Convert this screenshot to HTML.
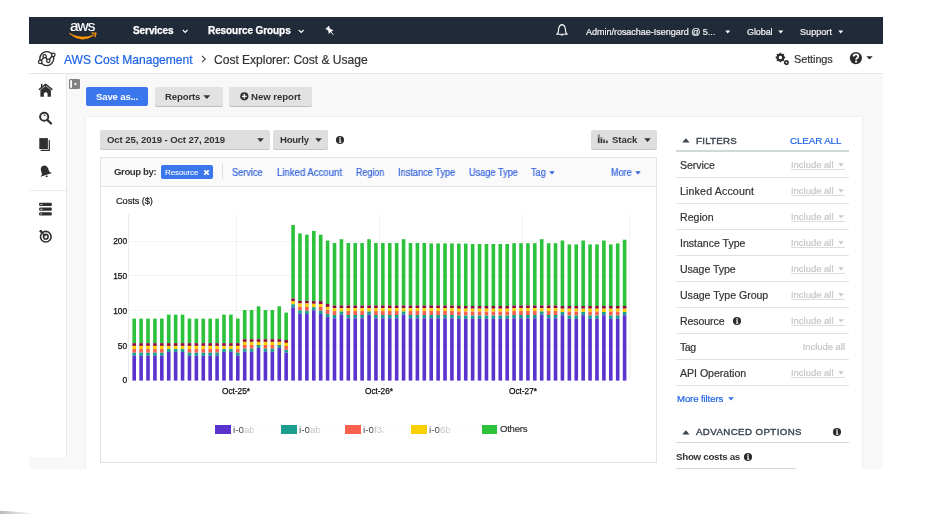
<!DOCTYPE html>
<html><head><meta charset="utf-8"><style>
html,body{margin:0;padding:0;background:#fff;width:931px;height:514px;overflow:hidden;position:relative}
.t{position:absolute;will-change:transform;white-space:nowrap;font-family:"Liberation Sans", sans-serif}
.r{position:absolute}
</style></head><body>
<div class="r" style="left:29.00px;top:74.00px;width:854.00px;height:395.00px;background:#f8f8f8;"></div>
<div class="r" style="left:29.00px;top:74.00px;width:37.00px;height:383.00px;background:#fff;"></div>
<div class="r" style="left:65.50px;top:74.00px;width:1.50px;height:383.00px;background:#e8e8e8;"></div>
<div class="r" style="left:29.00px;top:190.00px;width:36.50px;height:1.20px;background:#ececec;"></div>
<div class="r" style="left:29.00px;top:17.00px;width:854.00px;height:27.00px;background:#212a39;"></div>
<div class="r" style="left:29.00px;top:44.00px;width:854.00px;height:29.00px;background:#fff;"></div>
<div class="r" style="left:29.00px;top:73.00px;width:854.00px;height:1.00px;background:#e6e6e6;"></div>
<div class="t" style="left:70.00px;top:17.83px;font-size:15.2px;line-height:15.2px;color:#fff;font-weight:400;letter-spacing:-0.888px;-webkit-text-stroke:0.2px #fff;">aws</div>
<svg class="r" style="left:64.00px;top:19.00px" width="36" height="22" viewBox="0 0 36 22"><path d="M5.1 14.3 Q18 25.2 30.2 15.8 Q18 21.0 5.1 14.3 Z" fill="#f90" stroke="#f90" stroke-width="0.6" stroke-linejoin="round"/><path d="M28 14.1 L32 14.1 L31 17.6" stroke="#f90" stroke-width="1.4" fill="none" stroke-linecap="round" stroke-linejoin="round"/></svg>
<div class="t" style="left:133.20px;top:26.04px;font-size:10px;line-height:10px;color:#fff;font-weight:700;letter-spacing:-0.079px;-webkit-text-stroke:0.25px #fff;">Services</div>
<svg class="r" style="left:181.80px;top:28.80px" width="7" height="5" viewBox="0 0 7 5"><path d="M0.8 1 L3.2 3.4 L5.6 1" stroke="#fff" stroke-width="1.1" fill="none"/></svg>
<div class="t" style="left:207.50px;top:26.04px;font-size:10px;line-height:10px;color:#fff;font-weight:700;letter-spacing:-0.086px;-webkit-text-stroke:0.25px #fff;">Resource Groups</div>
<svg class="r" style="left:298.20px;top:28.80px" width="7" height="5" viewBox="0 0 7 5"><path d="M0.8 1 L3.2 3.4 L5.6 1" stroke="#fff" stroke-width="1.1" fill="none"/></svg>
<svg class="r" style="left:320.00px;top:22.00px" width="20" height="16" viewBox="0 0 20 16"><g transform="translate(10.3 9.1) rotate(-40) scale(0.88)"><rect x="-2.7" y="-5.6" width="5.4" height="1.3" rx="0.4" fill="#fff"/><rect x="-1.7" y="-4.6" width="3.4" height="3.8" fill="#fff"/><path d="M-1.7 -1.2 L-3.6 1.3 L3.6 1.3 L1.7 -1.2 Z" fill="#fff"/><path d="M0 1.2 L0 5.8" stroke="#fff" stroke-width="0.9"/></g></svg>
<svg class="r" style="left:552.00px;top:22.00px" width="20" height="18" viewBox="0 0 20 18"><path d="M10 2.6 C12.6 3 13.2 5 13.4 7.4 L13.8 10.6 L15.2 12.2 L4.8 12.2 L6.2 10.6 L6.6 7.4 C6.8 5 7.4 3 10 2.6 Z" stroke="#fff" stroke-width="1.1" fill="none" stroke-linejoin="round"/><path d="M8.6 12.8 Q10 14.8 11.4 12.8 Z" fill="#fff"/></svg>
<div class="t" style="left:585.80px;top:27.88px;font-size:9.0px;line-height:9.0px;color:#f4f4f4;font-weight:400;letter-spacing:-0.017px;-webkit-text-stroke:0.2px #f4f4f4;">Admin/rosachae-Isengard @ 5...</div>
<svg class="r" style="left:724.80px;top:29.60px" width="6" height="4" viewBox="0 0 6 4"><path d="M0.3 0.6 L5.2 0.6 L2.75 3.4 Z" fill="#fff"/></svg>
<div class="t" style="left:746.70px;top:27.88px;font-size:9.0px;line-height:9.0px;color:#f4f4f4;font-weight:400;letter-spacing:-0.084px;-webkit-text-stroke:0.2px #f4f4f4;">Global</div>
<svg class="r" style="left:778.40px;top:29.60px" width="6" height="4" viewBox="0 0 6 4"><path d="M0.3 0.6 L5.2 0.6 L2.75 3.4 Z" fill="#fff"/></svg>
<div class="t" style="left:800.30px;top:27.88px;font-size:9.0px;line-height:9.0px;color:#f4f4f4;font-weight:400;letter-spacing:0.064px;-webkit-text-stroke:0.2px #f4f4f4;">Support</div>
<svg class="r" style="left:838.40px;top:29.60px" width="6" height="4" viewBox="0 0 6 4"><path d="M0.3 0.6 L5.2 0.6 L2.75 3.4 Z" fill="#fff"/></svg>
<svg class="r" style="left:35.00px;top:48.00px" width="24" height="22" viewBox="0 0 24 22"><g stroke="#2b2b2b" stroke-width="1.35" fill="none"><circle cx="11.8" cy="10.6" r="7.0"/><path d="M5.35 13.9 L9.6 8.1 L13.3 12.8 L18.2 6.8"/></g><g fill="#fff" stroke="#2b2b2b" stroke-width="1.25"><circle cx="5.2" cy="13.9" r="1.75"/><circle cx="9.6" cy="8.2" r="1.7"/><circle cx="13.3" cy="12.8" r="1.7"/><circle cx="18.3" cy="6.8" r="1.75"/></g></svg>
<div class="t" style="left:64.40px;top:53.56px;font-size:12.1px;line-height:12.1px;color:#1f64e6;font-weight:400;letter-spacing:-0.042px;-webkit-text-stroke:0.2px #1f64e6;">AWS Cost Management</div>
<svg class="r" style="left:200.00px;top:54.00px" width="8" height="10" viewBox="0 0 8 10"><path d="M2 1.8 L5.3 5 L2 8.2" stroke="#444" stroke-width="1.1" fill="none"/></svg>
<div class="t" style="left:213.50px;top:53.56px;font-size:12.1px;line-height:12.1px;color:#333;font-weight:400;letter-spacing:-0.037px;-webkit-text-stroke:0.2px #333;">Cost Explorer: Cost &amp; Usage</div>
<svg class="r" style="left:772.00px;top:50.00px" width="20" height="18" viewBox="0 0 20 18"><g transform="translate(8.4 7.5)" fill="#2b2b2b"><circle r="2.75" fill="none" stroke="#2b2b2b" stroke-width="2"/><rect x="-0.95" y="-4.7" width="1.9" height="2" transform="rotate(0)"/><rect x="-0.95" y="-4.7" width="1.9" height="2" transform="rotate(45)"/><rect x="-0.95" y="-4.7" width="1.9" height="2" transform="rotate(90)"/><rect x="-0.95" y="-4.7" width="1.9" height="2" transform="rotate(135)"/><rect x="-0.95" y="-4.7" width="1.9" height="2" transform="rotate(180)"/><rect x="-0.95" y="-4.7" width="1.9" height="2" transform="rotate(225)"/><rect x="-0.95" y="-4.7" width="1.9" height="2" transform="rotate(270)"/><rect x="-0.95" y="-4.7" width="1.9" height="2" transform="rotate(315)"/></g><g transform="translate(14.4 12.6)" fill="#2b2b2b"><circle r="1.55" fill="none" stroke="#2b2b2b" stroke-width="1.5"/><rect x="-0.65" y="-2.6" width="1.3" height="1.2" transform="rotate(15)"/><rect x="-0.65" y="-2.6" width="1.3" height="1.2" transform="rotate(75)"/><rect x="-0.65" y="-2.6" width="1.3" height="1.2" transform="rotate(135)"/><rect x="-0.65" y="-2.6" width="1.3" height="1.2" transform="rotate(195)"/><rect x="-0.65" y="-2.6" width="1.3" height="1.2" transform="rotate(255)"/><rect x="-0.65" y="-2.6" width="1.3" height="1.2" transform="rotate(315)"/></g></svg>
<div class="t" style="left:793.50px;top:53.57px;font-size:10.9px;line-height:10.9px;color:#333;font-weight:400;letter-spacing:-0.083px;-webkit-text-stroke:0.2px #333;">Settings</div>
<svg class="r" style="left:846.00px;top:48.00px" width="20" height="20" viewBox="0 0 20 20"><circle cx="9.9" cy="10.1" r="6.1" fill="#2b2b2b"/><path d="M7.6 8.5 C7.6 5.6 12.3 5.6 12.3 8.3 C12.3 10 10.1 10.1 10.1 11.8" stroke="#fff" stroke-width="1.8" fill="none"/><rect x="9.1" y="12.7" width="2" height="1.8" fill="#fff"/></svg>
<svg class="r" style="left:865.50px;top:55.80px" width="7" height="4" viewBox="0 0 7 4"><path d="M0.3 0.3 L6.7 0.3 L3.5 3.5 Z" fill="#2b2b2b"/></svg>
<svg class="r" style="left:36.00px;top:80.00px" width="20" height="20" viewBox="0 0 20 20"><path d="M3.4 9.4 L9.6 4.3 L15.9 9.4" stroke="#2f2f2f" stroke-width="1.45" fill="none" stroke-linecap="round" stroke-linejoin="round"/><path d="M4.4 10 L9.6 6 L14.9 10 L14.9 16.7 L11.6 16.7 L11.6 13.4 Q9.8 10.9 7.9 13.4 L7.9 16.7 L4.4 16.7 Z" fill="#2f2f2f"/><rect x="5" y="3.8" width="1.4" height="3.6" fill="#2f2f2f"/></svg>
<svg class="r" style="left:36.00px;top:108.00px" width="20" height="20" viewBox="0 0 20 20"><circle cx="8.2" cy="8.75" r="4.1" stroke="#2f2f2f" stroke-width="2" fill="none"/><path d="M12 12.5 L15 15.5" stroke="#2f2f2f" stroke-width="2.3" stroke-linecap="round"/><path d="M7.5 7 Q9.2 6.8 10.1 8.4" stroke="#2f2f2f" stroke-width="1" fill="none"/></svg>
<svg class="r" style="left:36.00px;top:134.00px" width="20" height="20" viewBox="0 0 20 20"><rect x="3.3" y="4.1" width="8.6" height="10.9" fill="#2f2f2f"/><path d="M13.3 6 L13.3 16.4 L4.6 16.4" stroke="#2f2f2f" stroke-width="1.2" fill="none"/></svg>
<svg class="r" style="left:36.00px;top:162.00px" width="20" height="20" viewBox="0 0 20 20"><g transform="rotate(-18 9.5 9.5)"><path d="M9.2 3.4 C12.6 3.4 13 6.5 13 9 L13 11 L15.2 12.9 L3.2 12.9 L5.4 11 L5.4 9 C5.4 6.5 5.8 3.4 9.2 3.4 Z" fill="#2f2f2f"/><ellipse cx="9.2" cy="14.5" rx="1.1" ry="0.8" fill="#2f2f2f"/></g></svg>
<svg class="r" style="left:36.00px;top:199.00px" width="20" height="20" viewBox="0 0 20 20"><g fill="#2f2f2f"><rect x="3.1" y="3.7" width="12.7" height="3.2" rx="1"/><rect x="3.1" y="8.5" width="12.7" height="3.2" rx="1"/><rect x="3.1" y="13.2" width="12.7" height="3.2" rx="1"/></g><g fill="#fff"><rect x="4.3" y="4.9" width="2.2" height="0.9" rx="0.4"/><rect x="4.3" y="9.8" width="2.2" height="0.9" rx="0.4"/><rect x="4.4" y="14.2" width="1.4" height="1.4" opacity="0.7"/></g></svg>
<svg class="r" style="left:36.00px;top:226.00px" width="20" height="20" viewBox="0 0 20 20"><circle cx="9.8" cy="10.7" r="5.3" stroke="#2f2f2f" stroke-width="1.6" fill="none"/><circle cx="9.8" cy="10.7" r="2.3" stroke="#2f2f2f" stroke-width="1.6" fill="none"/><path d="M5.4 6.2 L9.4 10.2" stroke="#2f2f2f" stroke-width="1.3"/><path d="M3.6 4.4 L5.4 3.7 L7.2 6.6 L5.8 7.8 L3.2 5.6 Z" fill="#2f2f2f"/></svg>
<svg class="r" style="left:68.80px;top:78.80px" width="11" height="10" viewBox="0 0 11 10"><rect x="0" y="0" width="11" height="10" rx="1.2" fill="#808080"/><rect x="1.2" y="1.2" width="1.8" height="7.6" fill="#fff"/><path d="M5.5 3.4 L8.2 5 L5.5 6.6 Z" fill="#fff"/></svg>
<div class="r" style="left:85.70px;top:87.20px;width:62.60px;height:18.70px;background:#3a76ec;border-radius:2px;"></div>
<div class="t" style="left:95.70px;top:91.97px;font-size:9.6px;line-height:9.6px;color:#fff;font-weight:700;letter-spacing:-0.163px;">Save as...</div>
<div class="r" style="left:154.80px;top:87.20px;width:67.80px;height:18.80px;background:#e2e2e2;border-radius:2px;box-shadow:0 1px 0 #b9c0c4;"></div>
<div class="t" style="left:165.00px;top:91.97px;font-size:9.6px;line-height:9.6px;color:#333;font-weight:700;letter-spacing:-0.145px;">Reports</div>
<svg class="r" style="left:203.00px;top:95.00px" width="8" height="5" viewBox="0 0 8 5"><path d="M0.3 0.3 L7.3 0.3 L3.8 4 Z" fill="#333"/></svg>
<div class="r" style="left:229.00px;top:87.20px;width:82.50px;height:18.80px;background:#e2e2e2;border-radius:2px;box-shadow:0 1px 0 #b9c0c4;"></div>
<svg class="r" style="left:239.60px;top:92.20px" width="9" height="9" viewBox="0 0 9 9"><circle cx="4.3" cy="4.3" r="4.1" fill="#333"/><path d="M4.3 2 V6.6 M2 4.3 H6.6" stroke="#fff" stroke-width="1.3"/></svg>
<div class="t" style="left:251.40px;top:91.97px;font-size:9.6px;line-height:9.6px;color:#333;font-weight:700;letter-spacing:-0.038px;">New report</div>
<div class="r" style="left:86.00px;top:116.60px;width:776.00px;height:360.00px;background:#fff;box-shadow:0 0 0 0.6px #ececec;"></div>
<div class="r" style="left:99.50px;top:130.10px;width:170.30px;height:19.20px;background:#dedede;border-radius:2px;box-shadow:0 1px 0 #bfc7cb;"></div>
<div class="t" style="left:106.70px;top:134.77px;font-size:9.6px;line-height:9.6px;color:#333;font-weight:700;letter-spacing:-0.093px;">Oct 25, 2019 - Oct 27, 2019</div>
<svg class="r" style="left:256.50px;top:137.50px" width="7" height="5" viewBox="0 0 7 5"><path d="M0.2 0.3 L6.8 0.3 L3.5 4 Z" fill="#333"/></svg>
<div class="r" style="left:272.80px;top:130.10px;width:55.20px;height:19.20px;background:#dedede;border-radius:2px;box-shadow:0 1px 0 #bfc7cb;"></div>
<div class="t" style="left:279.80px;top:134.77px;font-size:9.6px;line-height:9.6px;color:#333;font-weight:700;letter-spacing:-0.281px;">Hourly</div>
<svg class="r" style="left:314.80px;top:137.50px" width="7" height="5" viewBox="0 0 7 5"><path d="M0.2 0.3 L6.8 0.3 L3.5 4 Z" fill="#333"/></svg>
<svg class="r" style="left:334.60px;top:134.60px" width="10" height="10" viewBox="0 0 10 10"><circle cx="5" cy="5" r="4.05" fill="#2b2b2b"/><circle cx="5.05" cy="2.9" r="0.8" fill="#fff"/><path d="M4.1 4.2 H5.8 V6.9 H6.4 V7.7 H3.9 V6.9 H4.5 V5 H4.1 Z" fill="#fff"/></svg>
<div class="r" style="left:591.30px;top:130.20px;width:65.70px;height:19.10px;background:#dedede;border-radius:2px;box-shadow:0 1px 0 #bfc7cb;"></div>
<svg class="r" style="left:597.00px;top:134.00px" width="12" height="10" viewBox="0 0 12 10"><g fill="#2b2b2b"><rect x="0.9" y="0.7" width="1.6" height="8.4"/><rect x="3.6" y="3.1" width="1.6" height="6"/><rect x="6.3" y="5.1" width="1.6" height="4"/><rect x="9" y="6.6" width="1.6" height="2.5"/></g><g fill="#9a9a9a"><rect x="0.9" y="0.7" width="1.6" height="3"/><rect x="3.6" y="3.1" width="1.6" height="2"/><rect x="6.3" y="5.1" width="1.6" height="1.3"/></g></svg>
<div class="t" style="left:612.10px;top:134.77px;font-size:9.6px;line-height:9.6px;color:#333;font-weight:700;letter-spacing:-0.083px;">Stack</div>
<svg class="r" style="left:643.50px;top:137.50px" width="7" height="5" viewBox="0 0 7 5"><path d="M0.2 0.3 L6.8 0.3 L3.5 4 Z" fill="#333"/></svg>
<div class="r" style="left:99.70px;top:156.60px;width:557.30px;height:306.00px;background:#fff;box-sizing:border-box;border:1px solid #e1e4e6;"></div>
<div class="r" style="left:100.70px;top:157.60px;width:555.30px;height:28.60px;background:#fafafa;border-bottom:1px solid #e3e3e3;"></div>
<div class="t" style="left:114.00px;top:167.37px;font-size:9.6px;line-height:9.6px;color:#333;font-weight:700;letter-spacing:-0.395px;">Group by:</div>
<div class="r" style="left:161.00px;top:165.20px;width:52.00px;height:13.60px;background:#3a76ec;border-radius:2px;"></div>
<div class="t" style="left:165.10px;top:168.74px;font-size:8.1px;line-height:8.1px;color:#fff;font-weight:400;letter-spacing:-0.167px;-webkit-text-stroke:0.2px #fff;-webkit-text-stroke:0.05px #fff;">Resource</div>
<svg class="r" style="left:203.00px;top:169.00px" width="7" height="7" viewBox="0 0 7 7"><path d="M1.3 1.3 L5.7 5.7 M5.7 1.3 L1.3 5.7" stroke="#fff" stroke-width="1.7"/></svg>
<div class="r" style="left:222.00px;top:164.00px;width:1.00px;height:15.00px;background:#ddd;"></div>
<div class="t" style="left:232.40px;top:167.75px;font-size:10.1px;line-height:10.1px;color:#3563dc;font-weight:400;transform:scaleX(0.9085);transform-origin:0 0;-webkit-text-stroke:0.2px #3563dc;">Service</div>
<div class="t" style="left:276.70px;top:167.75px;font-size:10.1px;line-height:10.1px;color:#3563dc;font-weight:400;transform:scaleX(0.9488);transform-origin:0 0;-webkit-text-stroke:0.2px #3563dc;">Linked Account</div>
<div class="t" style="left:355.90px;top:167.75px;font-size:10.1px;line-height:10.1px;color:#3563dc;font-weight:400;transform:scaleX(0.8842);transform-origin:0 0;-webkit-text-stroke:0.2px #3563dc;">Region</div>
<div class="t" style="left:397.90px;top:167.75px;font-size:10.1px;line-height:10.1px;color:#3563dc;font-weight:400;transform:scaleX(0.9123);transform-origin:0 0;-webkit-text-stroke:0.2px #3563dc;">Instance Type</div>
<div class="t" style="left:468.90px;top:167.75px;font-size:10.1px;line-height:10.1px;color:#3563dc;font-weight:400;transform:scaleX(0.9104);transform-origin:0 0;-webkit-text-stroke:0.2px #3563dc;">Usage Type</div>
<div class="t" style="left:531.30px;top:167.75px;font-size:10.1px;line-height:10.1px;color:#3563dc;font-weight:400;transform:scaleX(0.9029);transform-origin:0 0;-webkit-text-stroke:0.2px #3563dc;">Tag</div>
<svg class="r" style="left:548.50px;top:171.00px" width="6" height="4" viewBox="0 0 6 4"><path d="M0.2 0.3 L5.8 0.3 L3 3.4 Z" fill="#3563dc"/></svg>
<div class="t" style="left:610.50px;top:167.75px;font-size:10.1px;line-height:10.1px;color:#3563dc;font-weight:400;transform:scaleX(0.8953);transform-origin:0 0;-webkit-text-stroke:0.2px #3563dc;">More</div>
<svg class="r" style="left:634.50px;top:171.00px" width="6" height="4" viewBox="0 0 6 4"><path d="M0.2 0.3 L5.8 0.3 L3 3.4 Z" fill="#3563dc"/></svg>
<div class="t" style="left:115.60px;top:197.13px;font-size:9.3px;line-height:9.3px;color:#222;font-weight:400;letter-spacing:-0.103px;-webkit-text-stroke:0.2px #222;">Costs ($)</div>
<div class="r" style="left:129.20px;top:345.23px;width:500.00px;height:1.00px;background:#f4f4f4;"></div>
<div class="r" style="left:129.20px;top:310.35px;width:500.00px;height:1.00px;background:#f4f4f4;"></div>
<div class="r" style="left:129.20px;top:275.48px;width:500.00px;height:1.00px;background:#f4f4f4;"></div>
<div class="r" style="left:129.20px;top:240.60px;width:500.00px;height:1.00px;background:#f4f4f4;"></div>
<div class="r" style="left:128.30px;top:213.70px;width:1.00px;height:167.00px;background:#ececec;"></div>
<div class="r" style="left:235.90px;top:213.70px;width:1.00px;height:167.00px;background:#f2f2f2;"></div>
<div class="r" style="left:378.90px;top:213.70px;width:1.00px;height:167.00px;background:#f2f2f2;"></div>
<div class="r" style="left:522.20px;top:213.70px;width:1.00px;height:167.00px;background:#f2f2f2;"></div>
<div class="r" style="left:628.50px;top:213.70px;width:1.00px;height:167.00px;background:#f2f2f2;"></div>
<div class="t" style="left:60px;width:67.2px;text-align:right;top:376.49px;font-size:8.4px;line-height:8.4px;color:#111;-webkit-text-stroke:0.25px #111">0</div>
<div class="t" style="left:60px;width:67.2px;text-align:right;top:341.61px;font-size:8.4px;line-height:8.4px;color:#111;-webkit-text-stroke:0.25px #111">50</div>
<div class="t" style="left:60px;width:67.2px;text-align:right;top:306.74px;font-size:8.4px;line-height:8.4px;color:#111;-webkit-text-stroke:0.25px #111">100</div>
<div class="t" style="left:60px;width:67.2px;text-align:right;top:271.86px;font-size:8.4px;line-height:8.4px;color:#111;-webkit-text-stroke:0.25px #111">150</div>
<div class="t" style="left:60px;width:67.2px;text-align:right;top:236.99px;font-size:8.4px;line-height:8.4px;color:#111;-webkit-text-stroke:0.25px #111">200</div>
<div class="t" style="left:206.40px;width:60px;text-align:center;top:386.57px;font-size:8.3px;line-height:8.3px;color:#111;-webkit-text-stroke:0.25px #111">Oct-25*</div>
<div class="t" style="left:349.40px;width:60px;text-align:center;top:386.57px;font-size:8.3px;line-height:8.3px;color:#111;-webkit-text-stroke:0.25px #111">Oct-26*</div>
<div class="t" style="left:492.70px;width:60px;text-align:center;top:386.57px;font-size:8.3px;line-height:8.3px;color:#111;-webkit-text-stroke:0.25px #111">Oct-27*</div>
<svg class="r" style="left:0;top:0" width="931" height="514"><rect x="132.40" y="318.60" width="3.6" height="24.60" fill="#2cc23b"/><rect x="132.40" y="343.20" width="3.6" height="2.70" fill="#8c0b3d"/><rect x="132.40" y="345.90" width="3.6" height="3.10" fill="#fccf00"/><rect x="132.40" y="349.00" width="3.6" height="3.70" fill="#f8604f"/><rect x="132.40" y="352.70" width="3.6" height="3.10" fill="#1b9e8d"/><rect x="132.40" y="355.80" width="3.6" height="24.80" fill="#5a33cf"/><rect x="139.31" y="318.60" width="3.6" height="24.60" fill="#2cc23b"/><rect x="139.31" y="343.20" width="3.6" height="2.70" fill="#8c0b3d"/><rect x="139.31" y="345.90" width="3.6" height="3.10" fill="#fccf00"/><rect x="139.31" y="349.00" width="3.6" height="3.70" fill="#f8604f"/><rect x="139.31" y="352.70" width="3.6" height="3.10" fill="#1b9e8d"/><rect x="139.31" y="355.80" width="3.6" height="24.80" fill="#5a33cf"/><rect x="146.21" y="318.60" width="3.6" height="24.60" fill="#2cc23b"/><rect x="146.21" y="343.20" width="3.6" height="2.70" fill="#8c0b3d"/><rect x="146.21" y="345.90" width="3.6" height="3.10" fill="#fccf00"/><rect x="146.21" y="349.00" width="3.6" height="3.70" fill="#f8604f"/><rect x="146.21" y="352.70" width="3.6" height="3.10" fill="#1b9e8d"/><rect x="146.21" y="355.80" width="3.6" height="24.80" fill="#5a33cf"/><rect x="153.12" y="318.60" width="3.6" height="24.60" fill="#2cc23b"/><rect x="153.12" y="343.20" width="3.6" height="2.70" fill="#8c0b3d"/><rect x="153.12" y="345.90" width="3.6" height="3.10" fill="#fccf00"/><rect x="153.12" y="349.00" width="3.6" height="3.70" fill="#f8604f"/><rect x="153.12" y="352.70" width="3.6" height="3.10" fill="#1b9e8d"/><rect x="153.12" y="355.80" width="3.6" height="24.80" fill="#5a33cf"/><rect x="160.03" y="318.60" width="3.6" height="24.60" fill="#2cc23b"/><rect x="160.03" y="343.20" width="3.6" height="2.70" fill="#8c0b3d"/><rect x="160.03" y="345.90" width="3.6" height="3.10" fill="#fccf00"/><rect x="160.03" y="349.00" width="3.6" height="3.70" fill="#f8604f"/><rect x="160.03" y="352.70" width="3.6" height="3.10" fill="#1b9e8d"/><rect x="160.03" y="355.80" width="3.6" height="24.80" fill="#5a33cf"/><rect x="166.94" y="314.60" width="3.6" height="28.60" fill="#2cc23b"/><rect x="166.94" y="343.20" width="3.6" height="2.70" fill="#8c0b3d"/><rect x="166.94" y="345.90" width="3.6" height="3.10" fill="#fccf00"/><rect x="166.94" y="349.00" width="3.6" height="2.90" fill="#1b9e8d"/><rect x="166.94" y="351.90" width="3.6" height="28.70" fill="#5a33cf"/><rect x="173.84" y="314.60" width="3.6" height="28.60" fill="#2cc23b"/><rect x="173.84" y="343.20" width="3.6" height="2.70" fill="#8c0b3d"/><rect x="173.84" y="345.90" width="3.6" height="3.10" fill="#fccf00"/><rect x="173.84" y="349.00" width="3.6" height="2.90" fill="#1b9e8d"/><rect x="173.84" y="351.90" width="3.6" height="28.70" fill="#5a33cf"/><rect x="180.75" y="314.60" width="3.6" height="28.60" fill="#2cc23b"/><rect x="180.75" y="343.20" width="3.6" height="2.70" fill="#8c0b3d"/><rect x="180.75" y="345.90" width="3.6" height="3.10" fill="#fccf00"/><rect x="180.75" y="349.00" width="3.6" height="2.90" fill="#1b9e8d"/><rect x="180.75" y="351.90" width="3.6" height="28.70" fill="#5a33cf"/><rect x="187.66" y="318.60" width="3.6" height="24.60" fill="#2cc23b"/><rect x="187.66" y="343.20" width="3.6" height="2.70" fill="#8c0b3d"/><rect x="187.66" y="345.90" width="3.6" height="3.10" fill="#fccf00"/><rect x="187.66" y="349.00" width="3.6" height="3.70" fill="#f8604f"/><rect x="187.66" y="352.70" width="3.6" height="3.10" fill="#1b9e8d"/><rect x="187.66" y="355.80" width="3.6" height="24.80" fill="#5a33cf"/><rect x="194.56" y="318.60" width="3.6" height="24.60" fill="#2cc23b"/><rect x="194.56" y="343.20" width="3.6" height="2.70" fill="#8c0b3d"/><rect x="194.56" y="345.90" width="3.6" height="3.10" fill="#fccf00"/><rect x="194.56" y="349.00" width="3.6" height="3.70" fill="#f8604f"/><rect x="194.56" y="352.70" width="3.6" height="3.10" fill="#1b9e8d"/><rect x="194.56" y="355.80" width="3.6" height="24.80" fill="#5a33cf"/><rect x="201.47" y="318.60" width="3.6" height="24.60" fill="#2cc23b"/><rect x="201.47" y="343.20" width="3.6" height="2.70" fill="#8c0b3d"/><rect x="201.47" y="345.90" width="3.6" height="3.10" fill="#fccf00"/><rect x="201.47" y="349.00" width="3.6" height="3.70" fill="#f8604f"/><rect x="201.47" y="352.70" width="3.6" height="3.10" fill="#1b9e8d"/><rect x="201.47" y="355.80" width="3.6" height="24.80" fill="#5a33cf"/><rect x="208.38" y="318.60" width="3.6" height="24.60" fill="#2cc23b"/><rect x="208.38" y="343.20" width="3.6" height="2.70" fill="#8c0b3d"/><rect x="208.38" y="345.90" width="3.6" height="3.10" fill="#fccf00"/><rect x="208.38" y="349.00" width="3.6" height="3.70" fill="#f8604f"/><rect x="208.38" y="352.70" width="3.6" height="3.10" fill="#1b9e8d"/><rect x="208.38" y="355.80" width="3.6" height="24.80" fill="#5a33cf"/><rect x="215.28" y="318.60" width="3.6" height="24.60" fill="#2cc23b"/><rect x="215.28" y="343.20" width="3.6" height="2.70" fill="#8c0b3d"/><rect x="215.28" y="345.90" width="3.6" height="3.10" fill="#fccf00"/><rect x="215.28" y="349.00" width="3.6" height="3.70" fill="#f8604f"/><rect x="215.28" y="352.70" width="3.6" height="3.10" fill="#1b9e8d"/><rect x="215.28" y="355.80" width="3.6" height="24.80" fill="#5a33cf"/><rect x="222.19" y="314.60" width="3.6" height="28.60" fill="#2cc23b"/><rect x="222.19" y="343.20" width="3.6" height="2.70" fill="#8c0b3d"/><rect x="222.19" y="345.90" width="3.6" height="3.10" fill="#fccf00"/><rect x="222.19" y="349.00" width="3.6" height="2.90" fill="#1b9e8d"/><rect x="222.19" y="351.90" width="3.6" height="28.70" fill="#5a33cf"/><rect x="229.10" y="314.60" width="3.6" height="28.60" fill="#2cc23b"/><rect x="229.10" y="343.20" width="3.6" height="2.70" fill="#8c0b3d"/><rect x="229.10" y="345.90" width="3.6" height="3.10" fill="#fccf00"/><rect x="229.10" y="349.00" width="3.6" height="2.90" fill="#1b9e8d"/><rect x="229.10" y="351.90" width="3.6" height="28.70" fill="#5a33cf"/><rect x="236.00" y="318.60" width="3.6" height="24.60" fill="#2cc23b"/><rect x="236.00" y="343.20" width="3.6" height="2.70" fill="#8c0b3d"/><rect x="236.00" y="345.90" width="3.6" height="3.10" fill="#fccf00"/><rect x="236.00" y="349.00" width="3.6" height="3.70" fill="#f8604f"/><rect x="236.00" y="352.70" width="3.6" height="3.10" fill="#1b9e8d"/><rect x="236.00" y="355.80" width="3.6" height="24.80" fill="#5a33cf"/><rect x="242.91" y="310.00" width="3.6" height="29.20" fill="#2cc23b"/><rect x="242.91" y="339.20" width="3.6" height="2.70" fill="#8c0b3d"/><rect x="242.91" y="341.90" width="3.6" height="3.10" fill="#fccf00"/><rect x="242.91" y="345.00" width="3.6" height="3.70" fill="#f8604f"/><rect x="242.91" y="348.70" width="3.6" height="3.10" fill="#1b9e8d"/><rect x="242.91" y="351.80" width="3.6" height="28.80" fill="#5a33cf"/><rect x="249.82" y="310.00" width="3.6" height="29.20" fill="#2cc23b"/><rect x="249.82" y="339.20" width="3.6" height="2.70" fill="#8c0b3d"/><rect x="249.82" y="341.90" width="3.6" height="3.10" fill="#fccf00"/><rect x="249.82" y="345.00" width="3.6" height="3.70" fill="#f8604f"/><rect x="249.82" y="348.70" width="3.6" height="3.10" fill="#1b9e8d"/><rect x="249.82" y="351.80" width="3.6" height="28.80" fill="#5a33cf"/><rect x="256.73" y="306.30" width="3.6" height="32.90" fill="#2cc23b"/><rect x="256.73" y="339.20" width="3.6" height="2.70" fill="#8c0b3d"/><rect x="256.73" y="341.90" width="3.6" height="3.10" fill="#fccf00"/><rect x="256.73" y="345.00" width="3.6" height="2.90" fill="#1b9e8d"/><rect x="256.73" y="347.90" width="3.6" height="32.70" fill="#5a33cf"/><rect x="263.63" y="310.00" width="3.6" height="29.20" fill="#2cc23b"/><rect x="263.63" y="339.20" width="3.6" height="2.70" fill="#8c0b3d"/><rect x="263.63" y="341.90" width="3.6" height="3.10" fill="#fccf00"/><rect x="263.63" y="345.00" width="3.6" height="3.70" fill="#f8604f"/><rect x="263.63" y="348.70" width="3.6" height="3.10" fill="#1b9e8d"/><rect x="263.63" y="351.80" width="3.6" height="28.80" fill="#5a33cf"/><rect x="270.54" y="310.00" width="3.6" height="29.20" fill="#2cc23b"/><rect x="270.54" y="339.20" width="3.6" height="2.70" fill="#8c0b3d"/><rect x="270.54" y="341.90" width="3.6" height="3.10" fill="#fccf00"/><rect x="270.54" y="345.00" width="3.6" height="3.70" fill="#f8604f"/><rect x="270.54" y="348.70" width="3.6" height="3.10" fill="#1b9e8d"/><rect x="270.54" y="351.80" width="3.6" height="28.80" fill="#5a33cf"/><rect x="277.45" y="306.30" width="3.6" height="32.90" fill="#2cc23b"/><rect x="277.45" y="339.20" width="3.6" height="2.70" fill="#8c0b3d"/><rect x="277.45" y="341.90" width="3.6" height="3.10" fill="#fccf00"/><rect x="277.45" y="345.00" width="3.6" height="2.90" fill="#1b9e8d"/><rect x="277.45" y="347.90" width="3.6" height="32.70" fill="#5a33cf"/><rect x="284.35" y="312.60" width="3.6" height="27.40" fill="#2cc23b"/><rect x="284.35" y="340.00" width="3.6" height="2.90" fill="#8c0b3d"/><rect x="284.35" y="342.90" width="3.6" height="3.10" fill="#fccf00"/><rect x="284.35" y="346.00" width="3.6" height="3.80" fill="#f8604f"/><rect x="284.35" y="349.80" width="3.6" height="2.90" fill="#1b9e8d"/><rect x="284.35" y="352.70" width="3.6" height="27.90" fill="#5a33cf"/><rect x="291.26" y="225.05" width="3.6" height="73.45" fill="#2cc23b"/><rect x="291.26" y="298.50" width="3.6" height="2.60" fill="#8c0b3d"/><rect x="291.26" y="301.10" width="3.6" height="3.20" fill="#fccf00"/><rect x="291.26" y="304.30" width="3.6" height="3.10" fill="#1b9e8d"/><rect x="291.26" y="307.40" width="3.6" height="73.20" fill="#5a33cf"/><rect x="298.17" y="233.40" width="3.6" height="67.40" fill="#2cc23b"/><rect x="298.17" y="300.80" width="3.6" height="2.70" fill="#8c0b3d"/><rect x="298.17" y="303.50" width="3.6" height="3.10" fill="#fccf00"/><rect x="298.17" y="306.60" width="3.6" height="3.70" fill="#f8604f"/><rect x="298.17" y="310.30" width="3.6" height="3.40" fill="#1b9e8d"/><rect x="298.17" y="313.70" width="3.6" height="66.90" fill="#5a33cf"/><rect x="305.08" y="234.70" width="3.6" height="66.10" fill="#2cc23b"/><rect x="305.08" y="300.80" width="3.6" height="2.70" fill="#8c0b3d"/><rect x="305.08" y="303.50" width="3.6" height="3.40" fill="#fccf00"/><rect x="305.08" y="306.90" width="3.6" height="3.90" fill="#f8604f"/><rect x="305.08" y="310.80" width="3.6" height="3.20" fill="#1b9e8d"/><rect x="305.08" y="314.00" width="3.6" height="66.60" fill="#5a33cf"/><rect x="311.98" y="230.90" width="3.6" height="70.20" fill="#2cc23b"/><rect x="311.98" y="301.10" width="3.6" height="2.70" fill="#8c0b3d"/><rect x="311.98" y="303.80" width="3.6" height="3.40" fill="#fccf00"/><rect x="311.98" y="307.20" width="3.6" height="3.10" fill="#1b9e8d"/><rect x="311.98" y="310.30" width="3.6" height="70.30" fill="#5a33cf"/><rect x="318.89" y="234.70" width="3.6" height="66.40" fill="#2cc23b"/><rect x="318.89" y="301.10" width="3.6" height="2.90" fill="#8c0b3d"/><rect x="318.89" y="304.00" width="3.6" height="2.90" fill="#fccf00"/><rect x="318.89" y="306.90" width="3.6" height="3.90" fill="#f8604f"/><rect x="318.89" y="310.80" width="3.6" height="3.20" fill="#1b9e8d"/><rect x="318.89" y="314.00" width="3.6" height="66.60" fill="#5a33cf"/><rect x="325.80" y="240.50" width="3.6" height="63.50" fill="#2cc23b"/><rect x="325.80" y="304.00" width="3.6" height="2.90" fill="#8c0b3d"/><rect x="325.80" y="306.90" width="3.6" height="2.90" fill="#fccf00"/><rect x="325.80" y="309.80" width="3.6" height="4.20" fill="#f8604f"/><rect x="325.80" y="314.00" width="3.6" height="3.10" fill="#1b9e8d"/><rect x="325.80" y="317.10" width="3.6" height="63.50" fill="#5a33cf"/><rect x="332.70" y="243.00" width="3.6" height="62.50" fill="#2cc23b"/><rect x="332.70" y="305.50" width="3.6" height="2.70" fill="#8c0b3d"/><rect x="332.70" y="308.20" width="3.6" height="2.90" fill="#fccf00"/><rect x="332.70" y="311.10" width="3.6" height="3.90" fill="#f8604f"/><rect x="332.70" y="315.00" width="3.6" height="3.30" fill="#1b9e8d"/><rect x="332.70" y="318.30" width="3.6" height="62.30" fill="#5a33cf"/><rect x="339.61" y="239.20" width="3.6" height="66.30" fill="#2cc23b"/><rect x="339.61" y="305.50" width="3.6" height="2.70" fill="#8c0b3d"/><rect x="339.61" y="308.20" width="3.6" height="3.30" fill="#fccf00"/><rect x="339.61" y="311.50" width="3.6" height="3.20" fill="#1b9e8d"/><rect x="339.61" y="314.70" width="3.6" height="65.90" fill="#5a33cf"/><rect x="346.52" y="243.00" width="3.6" height="62.50" fill="#2cc23b"/><rect x="346.52" y="305.50" width="3.6" height="2.70" fill="#8c0b3d"/><rect x="346.52" y="308.20" width="3.6" height="2.90" fill="#fccf00"/><rect x="346.52" y="311.10" width="3.6" height="3.90" fill="#f8604f"/><rect x="346.52" y="315.00" width="3.6" height="3.30" fill="#1b9e8d"/><rect x="346.52" y="318.30" width="3.6" height="62.30" fill="#5a33cf"/><rect x="353.42" y="243.00" width="3.6" height="62.50" fill="#2cc23b"/><rect x="353.42" y="305.50" width="3.6" height="2.70" fill="#8c0b3d"/><rect x="353.42" y="308.20" width="3.6" height="2.90" fill="#fccf00"/><rect x="353.42" y="311.10" width="3.6" height="3.90" fill="#f8604f"/><rect x="353.42" y="315.00" width="3.6" height="3.30" fill="#1b9e8d"/><rect x="353.42" y="318.30" width="3.6" height="62.30" fill="#5a33cf"/><rect x="360.33" y="243.00" width="3.6" height="62.50" fill="#2cc23b"/><rect x="360.33" y="305.50" width="3.6" height="2.70" fill="#8c0b3d"/><rect x="360.33" y="308.20" width="3.6" height="2.90" fill="#fccf00"/><rect x="360.33" y="311.10" width="3.6" height="3.90" fill="#f8604f"/><rect x="360.33" y="315.00" width="3.6" height="3.30" fill="#1b9e8d"/><rect x="360.33" y="318.30" width="3.6" height="62.30" fill="#5a33cf"/><rect x="367.24" y="239.20" width="3.6" height="66.30" fill="#2cc23b"/><rect x="367.24" y="305.50" width="3.6" height="2.70" fill="#8c0b3d"/><rect x="367.24" y="308.20" width="3.6" height="3.30" fill="#fccf00"/><rect x="367.24" y="311.50" width="3.6" height="3.20" fill="#1b9e8d"/><rect x="367.24" y="314.70" width="3.6" height="65.90" fill="#5a33cf"/><rect x="374.14" y="243.00" width="3.6" height="62.50" fill="#2cc23b"/><rect x="374.14" y="305.50" width="3.6" height="2.70" fill="#8c0b3d"/><rect x="374.14" y="308.20" width="3.6" height="2.90" fill="#fccf00"/><rect x="374.14" y="311.10" width="3.6" height="3.90" fill="#f8604f"/><rect x="374.14" y="315.00" width="3.6" height="3.30" fill="#1b9e8d"/><rect x="374.14" y="318.30" width="3.6" height="62.30" fill="#5a33cf"/><rect x="381.05" y="243.00" width="3.6" height="62.50" fill="#2cc23b"/><rect x="381.05" y="305.50" width="3.6" height="2.70" fill="#8c0b3d"/><rect x="381.05" y="308.20" width="3.6" height="2.90" fill="#fccf00"/><rect x="381.05" y="311.10" width="3.6" height="3.90" fill="#f8604f"/><rect x="381.05" y="315.00" width="3.6" height="3.30" fill="#1b9e8d"/><rect x="381.05" y="318.30" width="3.6" height="62.30" fill="#5a33cf"/><rect x="387.96" y="243.00" width="3.6" height="62.50" fill="#2cc23b"/><rect x="387.96" y="305.50" width="3.6" height="2.70" fill="#8c0b3d"/><rect x="387.96" y="308.20" width="3.6" height="2.90" fill="#fccf00"/><rect x="387.96" y="311.10" width="3.6" height="3.90" fill="#f8604f"/><rect x="387.96" y="315.00" width="3.6" height="3.30" fill="#1b9e8d"/><rect x="387.96" y="318.30" width="3.6" height="62.30" fill="#5a33cf"/><rect x="394.87" y="243.00" width="3.6" height="62.50" fill="#2cc23b"/><rect x="394.87" y="305.50" width="3.6" height="2.70" fill="#8c0b3d"/><rect x="394.87" y="308.20" width="3.6" height="2.90" fill="#fccf00"/><rect x="394.87" y="311.10" width="3.6" height="3.90" fill="#f8604f"/><rect x="394.87" y="315.00" width="3.6" height="3.30" fill="#1b9e8d"/><rect x="394.87" y="318.30" width="3.6" height="62.30" fill="#5a33cf"/><rect x="401.77" y="239.20" width="3.6" height="66.30" fill="#2cc23b"/><rect x="401.77" y="305.50" width="3.6" height="2.70" fill="#8c0b3d"/><rect x="401.77" y="308.20" width="3.6" height="3.30" fill="#fccf00"/><rect x="401.77" y="311.50" width="3.6" height="3.20" fill="#1b9e8d"/><rect x="401.77" y="314.70" width="3.6" height="65.90" fill="#5a33cf"/><rect x="408.68" y="243.00" width="3.6" height="62.50" fill="#2cc23b"/><rect x="408.68" y="305.50" width="3.6" height="2.70" fill="#8c0b3d"/><rect x="408.68" y="308.20" width="3.6" height="2.90" fill="#fccf00"/><rect x="408.68" y="311.10" width="3.6" height="3.90" fill="#f8604f"/><rect x="408.68" y="315.00" width="3.6" height="3.30" fill="#1b9e8d"/><rect x="408.68" y="318.30" width="3.6" height="62.30" fill="#5a33cf"/><rect x="415.59" y="243.00" width="3.6" height="62.50" fill="#2cc23b"/><rect x="415.59" y="305.50" width="3.6" height="2.70" fill="#8c0b3d"/><rect x="415.59" y="308.20" width="3.6" height="2.90" fill="#fccf00"/><rect x="415.59" y="311.10" width="3.6" height="3.90" fill="#f8604f"/><rect x="415.59" y="315.00" width="3.6" height="3.30" fill="#1b9e8d"/><rect x="415.59" y="318.30" width="3.6" height="62.30" fill="#5a33cf"/><rect x="422.49" y="243.00" width="3.6" height="62.50" fill="#2cc23b"/><rect x="422.49" y="305.50" width="3.6" height="2.70" fill="#8c0b3d"/><rect x="422.49" y="308.20" width="3.6" height="2.90" fill="#fccf00"/><rect x="422.49" y="311.10" width="3.6" height="3.90" fill="#f8604f"/><rect x="422.49" y="315.00" width="3.6" height="3.30" fill="#1b9e8d"/><rect x="422.49" y="318.30" width="3.6" height="62.30" fill="#5a33cf"/><rect x="429.40" y="243.40" width="3.6" height="62.10" fill="#2cc23b"/><rect x="429.40" y="305.50" width="3.6" height="2.70" fill="#8c0b3d"/><rect x="429.40" y="308.20" width="3.6" height="2.90" fill="#fccf00"/><rect x="429.40" y="311.10" width="3.6" height="3.90" fill="#f8604f"/><rect x="429.40" y="315.00" width="3.6" height="3.30" fill="#1b9e8d"/><rect x="429.40" y="318.30" width="3.6" height="62.30" fill="#5a33cf"/><rect x="436.31" y="243.40" width="3.6" height="62.10" fill="#2cc23b"/><rect x="436.31" y="305.50" width="3.6" height="2.70" fill="#8c0b3d"/><rect x="436.31" y="308.20" width="3.6" height="2.90" fill="#fccf00"/><rect x="436.31" y="311.10" width="3.6" height="3.90" fill="#f8604f"/><rect x="436.31" y="315.00" width="3.6" height="3.30" fill="#1b9e8d"/><rect x="436.31" y="318.30" width="3.6" height="62.30" fill="#5a33cf"/><rect x="443.22" y="243.40" width="3.6" height="62.10" fill="#2cc23b"/><rect x="443.22" y="305.50" width="3.6" height="2.70" fill="#8c0b3d"/><rect x="443.22" y="308.20" width="3.6" height="2.90" fill="#fccf00"/><rect x="443.22" y="311.10" width="3.6" height="3.90" fill="#f8604f"/><rect x="443.22" y="315.00" width="3.6" height="3.30" fill="#1b9e8d"/><rect x="443.22" y="318.30" width="3.6" height="62.30" fill="#5a33cf"/><rect x="450.12" y="243.40" width="3.6" height="62.10" fill="#2cc23b"/><rect x="450.12" y="305.50" width="3.6" height="2.70" fill="#8c0b3d"/><rect x="450.12" y="308.20" width="3.6" height="2.90" fill="#fccf00"/><rect x="450.12" y="311.10" width="3.6" height="3.90" fill="#f8604f"/><rect x="450.12" y="315.00" width="3.6" height="3.30" fill="#1b9e8d"/><rect x="450.12" y="318.30" width="3.6" height="62.30" fill="#5a33cf"/><rect x="457.03" y="243.60" width="3.6" height="62.40" fill="#2cc23b"/><rect x="457.03" y="306.00" width="3.6" height="2.70" fill="#8c0b3d"/><rect x="457.03" y="308.70" width="3.6" height="2.90" fill="#fccf00"/><rect x="457.03" y="311.60" width="3.6" height="3.90" fill="#f8604f"/><rect x="457.03" y="315.50" width="3.6" height="3.30" fill="#1b9e8d"/><rect x="457.03" y="318.80" width="3.6" height="61.80" fill="#5a33cf"/><rect x="463.94" y="243.60" width="3.6" height="62.40" fill="#2cc23b"/><rect x="463.94" y="306.00" width="3.6" height="2.70" fill="#8c0b3d"/><rect x="463.94" y="308.70" width="3.6" height="2.90" fill="#fccf00"/><rect x="463.94" y="311.60" width="3.6" height="3.90" fill="#f8604f"/><rect x="463.94" y="315.50" width="3.6" height="3.30" fill="#1b9e8d"/><rect x="463.94" y="318.80" width="3.6" height="61.80" fill="#5a33cf"/><rect x="470.84" y="244.00" width="3.6" height="62.00" fill="#2cc23b"/><rect x="470.84" y="306.00" width="3.6" height="2.70" fill="#8c0b3d"/><rect x="470.84" y="308.70" width="3.6" height="2.90" fill="#fccf00"/><rect x="470.84" y="311.60" width="3.6" height="3.90" fill="#f8604f"/><rect x="470.84" y="315.50" width="3.6" height="3.30" fill="#1b9e8d"/><rect x="470.84" y="318.80" width="3.6" height="61.80" fill="#5a33cf"/><rect x="477.75" y="244.00" width="3.6" height="62.00" fill="#2cc23b"/><rect x="477.75" y="306.00" width="3.6" height="2.70" fill="#8c0b3d"/><rect x="477.75" y="308.70" width="3.6" height="2.90" fill="#fccf00"/><rect x="477.75" y="311.60" width="3.6" height="3.90" fill="#f8604f"/><rect x="477.75" y="315.50" width="3.6" height="3.30" fill="#1b9e8d"/><rect x="477.75" y="318.80" width="3.6" height="61.80" fill="#5a33cf"/><rect x="484.66" y="244.00" width="3.6" height="62.00" fill="#2cc23b"/><rect x="484.66" y="306.00" width="3.6" height="2.70" fill="#8c0b3d"/><rect x="484.66" y="308.70" width="3.6" height="2.90" fill="#fccf00"/><rect x="484.66" y="311.60" width="3.6" height="3.90" fill="#f8604f"/><rect x="484.66" y="315.50" width="3.6" height="3.30" fill="#1b9e8d"/><rect x="484.66" y="318.80" width="3.6" height="61.80" fill="#5a33cf"/><rect x="491.56" y="244.00" width="3.6" height="62.00" fill="#2cc23b"/><rect x="491.56" y="306.00" width="3.6" height="2.70" fill="#8c0b3d"/><rect x="491.56" y="308.70" width="3.6" height="2.90" fill="#fccf00"/><rect x="491.56" y="311.60" width="3.6" height="3.90" fill="#f8604f"/><rect x="491.56" y="315.50" width="3.6" height="3.30" fill="#1b9e8d"/><rect x="491.56" y="318.80" width="3.6" height="61.80" fill="#5a33cf"/><rect x="498.47" y="244.00" width="3.6" height="62.00" fill="#2cc23b"/><rect x="498.47" y="306.00" width="3.6" height="2.70" fill="#8c0b3d"/><rect x="498.47" y="308.70" width="3.6" height="2.90" fill="#fccf00"/><rect x="498.47" y="311.60" width="3.6" height="3.90" fill="#f8604f"/><rect x="498.47" y="315.50" width="3.6" height="3.30" fill="#1b9e8d"/><rect x="498.47" y="318.80" width="3.6" height="61.80" fill="#5a33cf"/><rect x="505.38" y="244.00" width="3.6" height="62.00" fill="#2cc23b"/><rect x="505.38" y="306.00" width="3.6" height="2.70" fill="#8c0b3d"/><rect x="505.38" y="308.70" width="3.6" height="2.90" fill="#fccf00"/><rect x="505.38" y="311.60" width="3.6" height="3.90" fill="#f8604f"/><rect x="505.38" y="315.50" width="3.6" height="3.30" fill="#1b9e8d"/><rect x="505.38" y="318.80" width="3.6" height="61.80" fill="#5a33cf"/><rect x="512.28" y="243.20" width="3.6" height="62.30" fill="#2cc23b"/><rect x="512.28" y="305.50" width="3.6" height="2.70" fill="#8c0b3d"/><rect x="512.28" y="308.20" width="3.6" height="2.90" fill="#fccf00"/><rect x="512.28" y="311.10" width="3.6" height="3.90" fill="#f8604f"/><rect x="512.28" y="315.00" width="3.6" height="3.30" fill="#1b9e8d"/><rect x="512.28" y="318.30" width="3.6" height="62.30" fill="#5a33cf"/><rect x="519.19" y="243.20" width="3.6" height="62.30" fill="#2cc23b"/><rect x="519.19" y="305.50" width="3.6" height="2.70" fill="#8c0b3d"/><rect x="519.19" y="308.20" width="3.6" height="2.90" fill="#fccf00"/><rect x="519.19" y="311.10" width="3.6" height="3.90" fill="#f8604f"/><rect x="519.19" y="315.00" width="3.6" height="3.30" fill="#1b9e8d"/><rect x="519.19" y="318.30" width="3.6" height="62.30" fill="#5a33cf"/><rect x="526.10" y="243.20" width="3.6" height="62.30" fill="#2cc23b"/><rect x="526.10" y="305.50" width="3.6" height="2.70" fill="#8c0b3d"/><rect x="526.10" y="308.20" width="3.6" height="2.90" fill="#fccf00"/><rect x="526.10" y="311.10" width="3.6" height="3.90" fill="#f8604f"/><rect x="526.10" y="315.00" width="3.6" height="3.30" fill="#1b9e8d"/><rect x="526.10" y="318.30" width="3.6" height="62.30" fill="#5a33cf"/><rect x="533.01" y="243.20" width="3.6" height="62.30" fill="#2cc23b"/><rect x="533.01" y="305.50" width="3.6" height="2.70" fill="#8c0b3d"/><rect x="533.01" y="308.20" width="3.6" height="2.90" fill="#fccf00"/><rect x="533.01" y="311.10" width="3.6" height="3.90" fill="#f8604f"/><rect x="533.01" y="315.00" width="3.6" height="3.30" fill="#1b9e8d"/><rect x="533.01" y="318.30" width="3.6" height="62.30" fill="#5a33cf"/><rect x="539.91" y="239.20" width="3.6" height="66.30" fill="#2cc23b"/><rect x="539.91" y="305.50" width="3.6" height="2.70" fill="#8c0b3d"/><rect x="539.91" y="308.20" width="3.6" height="3.30" fill="#fccf00"/><rect x="539.91" y="311.50" width="3.6" height="3.20" fill="#1b9e8d"/><rect x="539.91" y="314.70" width="3.6" height="65.90" fill="#5a33cf"/><rect x="546.82" y="243.20" width="3.6" height="62.30" fill="#2cc23b"/><rect x="546.82" y="305.50" width="3.6" height="2.70" fill="#8c0b3d"/><rect x="546.82" y="308.20" width="3.6" height="2.90" fill="#fccf00"/><rect x="546.82" y="311.10" width="3.6" height="3.90" fill="#f8604f"/><rect x="546.82" y="315.00" width="3.6" height="3.30" fill="#1b9e8d"/><rect x="546.82" y="318.30" width="3.6" height="62.30" fill="#5a33cf"/><rect x="553.73" y="243.20" width="3.6" height="62.30" fill="#2cc23b"/><rect x="553.73" y="305.50" width="3.6" height="2.70" fill="#8c0b3d"/><rect x="553.73" y="308.20" width="3.6" height="2.90" fill="#fccf00"/><rect x="553.73" y="311.10" width="3.6" height="3.90" fill="#f8604f"/><rect x="553.73" y="315.00" width="3.6" height="3.30" fill="#1b9e8d"/><rect x="553.73" y="318.30" width="3.6" height="62.30" fill="#5a33cf"/><rect x="560.63" y="240.50" width="3.6" height="65.50" fill="#2cc23b"/><rect x="560.63" y="306.00" width="3.6" height="2.70" fill="#8c0b3d"/><rect x="560.63" y="308.70" width="3.6" height="3.30" fill="#fccf00"/><rect x="560.63" y="312.00" width="3.6" height="3.20" fill="#1b9e8d"/><rect x="560.63" y="315.20" width="3.6" height="65.40" fill="#5a33cf"/><rect x="567.54" y="244.40" width="3.6" height="61.60" fill="#2cc23b"/><rect x="567.54" y="306.00" width="3.6" height="2.70" fill="#8c0b3d"/><rect x="567.54" y="308.70" width="3.6" height="2.90" fill="#fccf00"/><rect x="567.54" y="311.60" width="3.6" height="3.90" fill="#f8604f"/><rect x="567.54" y="315.50" width="3.6" height="3.30" fill="#1b9e8d"/><rect x="567.54" y="318.80" width="3.6" height="61.80" fill="#5a33cf"/><rect x="574.45" y="244.40" width="3.6" height="61.60" fill="#2cc23b"/><rect x="574.45" y="306.00" width="3.6" height="2.70" fill="#8c0b3d"/><rect x="574.45" y="308.70" width="3.6" height="2.90" fill="#fccf00"/><rect x="574.45" y="311.60" width="3.6" height="3.90" fill="#f8604f"/><rect x="574.45" y="315.50" width="3.6" height="3.30" fill="#1b9e8d"/><rect x="574.45" y="318.80" width="3.6" height="61.80" fill="#5a33cf"/><rect x="581.36" y="240.50" width="3.6" height="65.50" fill="#2cc23b"/><rect x="581.36" y="306.00" width="3.6" height="2.70" fill="#8c0b3d"/><rect x="581.36" y="308.70" width="3.6" height="3.30" fill="#fccf00"/><rect x="581.36" y="312.00" width="3.6" height="3.20" fill="#1b9e8d"/><rect x="581.36" y="315.20" width="3.6" height="65.40" fill="#5a33cf"/><rect x="588.26" y="244.40" width="3.6" height="61.60" fill="#2cc23b"/><rect x="588.26" y="306.00" width="3.6" height="2.70" fill="#8c0b3d"/><rect x="588.26" y="308.70" width="3.6" height="2.90" fill="#fccf00"/><rect x="588.26" y="311.60" width="3.6" height="3.90" fill="#f8604f"/><rect x="588.26" y="315.50" width="3.6" height="3.30" fill="#1b9e8d"/><rect x="588.26" y="318.80" width="3.6" height="61.80" fill="#5a33cf"/><rect x="595.17" y="244.40" width="3.6" height="61.60" fill="#2cc23b"/><rect x="595.17" y="306.00" width="3.6" height="2.70" fill="#8c0b3d"/><rect x="595.17" y="308.70" width="3.6" height="2.90" fill="#fccf00"/><rect x="595.17" y="311.60" width="3.6" height="3.90" fill="#f8604f"/><rect x="595.17" y="315.50" width="3.6" height="3.30" fill="#1b9e8d"/><rect x="595.17" y="318.80" width="3.6" height="61.80" fill="#5a33cf"/><rect x="602.08" y="240.50" width="3.6" height="65.50" fill="#2cc23b"/><rect x="602.08" y="306.00" width="3.6" height="2.70" fill="#8c0b3d"/><rect x="602.08" y="308.70" width="3.6" height="3.30" fill="#fccf00"/><rect x="602.08" y="312.00" width="3.6" height="3.20" fill="#1b9e8d"/><rect x="602.08" y="315.20" width="3.6" height="65.40" fill="#5a33cf"/><rect x="608.98" y="244.40" width="3.6" height="61.60" fill="#2cc23b"/><rect x="608.98" y="306.00" width="3.6" height="2.70" fill="#8c0b3d"/><rect x="608.98" y="308.70" width="3.6" height="2.90" fill="#fccf00"/><rect x="608.98" y="311.60" width="3.6" height="3.90" fill="#f8604f"/><rect x="608.98" y="315.50" width="3.6" height="3.30" fill="#1b9e8d"/><rect x="608.98" y="318.80" width="3.6" height="61.80" fill="#5a33cf"/><rect x="615.89" y="243.40" width="3.6" height="62.60" fill="#2cc23b"/><rect x="615.89" y="306.00" width="3.6" height="2.70" fill="#8c0b3d"/><rect x="615.89" y="308.70" width="3.6" height="2.90" fill="#fccf00"/><rect x="615.89" y="311.60" width="3.6" height="3.90" fill="#f8604f"/><rect x="615.89" y="315.50" width="3.6" height="3.30" fill="#1b9e8d"/><rect x="615.89" y="318.80" width="3.6" height="61.80" fill="#5a33cf"/><rect x="622.80" y="239.70" width="3.6" height="66.30" fill="#2cc23b"/><rect x="622.80" y="306.00" width="3.6" height="2.70" fill="#8c0b3d"/><rect x="622.80" y="308.70" width="3.6" height="3.30" fill="#fccf00"/><rect x="622.80" y="312.00" width="3.6" height="3.20" fill="#1b9e8d"/><rect x="622.80" y="315.20" width="3.6" height="65.40" fill="#5a33cf"/></svg>
<div class="r" style="left:215.40px;top:424.80px;width:15.50px;height:9.60px;background:#5a33cf;"></div>
<div class="t" style="left:232.70px;top:424.60px;font-size:9.8px;line-height:9.8px;color:#444;width:48px;overflow:hidden;white-space:nowrap;-webkit-mask-image:linear-gradient(90deg,#000 0,#000 10px,rgba(0,0,0,0.35) 11px,rgba(0,0,0,0.3) 20px,rgba(0,0,0,0.02) 22px,rgba(0,0,0,0.01) 48px)">i-0ab5c7e1</div>
<div class="r" style="left:281.20px;top:424.80px;width:15.50px;height:9.60px;background:#1b9e8d;"></div>
<div class="t" style="left:298.50px;top:424.60px;font-size:9.8px;line-height:9.8px;color:#444;width:48px;overflow:hidden;white-space:nowrap;-webkit-mask-image:linear-gradient(90deg,#000 0,#000 10px,rgba(0,0,0,0.35) 11px,rgba(0,0,0,0.3) 20px,rgba(0,0,0,0.02) 22px,rgba(0,0,0,0.01) 48px)">i-0ab5d9f3</div>
<div class="r" style="left:345.30px;top:424.80px;width:15.50px;height:9.60px;background:#f8604f;"></div>
<div class="t" style="left:362.60px;top:424.60px;font-size:9.8px;line-height:9.8px;color:#444;width:48px;overflow:hidden;white-space:nowrap;-webkit-mask-image:linear-gradient(90deg,#000 0,#000 10px,rgba(0,0,0,0.35) 11px,rgba(0,0,0,0.3) 20px,rgba(0,0,0,0.02) 22px,rgba(0,0,0,0.01) 48px)">i-0f334a1b</div>
<div class="r" style="left:411.30px;top:424.80px;width:15.50px;height:9.60px;background:#fccf00;"></div>
<div class="t" style="left:428.60px;top:424.60px;font-size:9.8px;line-height:9.8px;color:#444;width:48px;overflow:hidden;white-space:nowrap;-webkit-mask-image:linear-gradient(90deg,#000 0,#000 10px,rgba(0,0,0,0.35) 11px,rgba(0,0,0,0.3) 20px,rgba(0,0,0,0.02) 22px,rgba(0,0,0,0.01) 48px)">i-06b9c2d4</div>
<div class="r" style="left:481.80px;top:424.80px;width:15.50px;height:9.60px;background:#2cc23b;"></div>
<div class="t" style="left:499.80px;top:424.46px;font-size:9.5px;line-height:9.5px;color:#333;font-weight:400;letter-spacing:-0.202px;-webkit-text-stroke:0.2px #333;">Others</div>
<svg class="r" style="left:681.80px;top:138.00px" width="8" height="5" viewBox="0 0 8 5"><path d="M0.2 4.4 L7.6 4.4 L3.9 0.3 Z" fill="#3b4550"/></svg>
<div class="t" style="left:695.50px;top:135.69px;font-size:9.7px;line-height:9.7px;color:#3b4550;font-weight:400;letter-spacing:0.272px;-webkit-text-stroke:0.2px #3b4550;-webkit-text-stroke:0.4px #3b4550;">FILTERS</div>
<div class="t" style="left:790.40px;top:135.60px;font-size:9.8px;line-height:9.8px;color:#1f64e6;font-weight:400;letter-spacing:-0.112px;-webkit-text-stroke:0.2px #1f64e6;">CLEAR ALL</div>
<div class="r" style="left:676.10px;top:150.30px;width:172.90px;height:1.60px;background:#cfd7db;"></div>
<div class="t" style="left:680.30px;top:159.63px;font-size:10.6px;line-height:10.6px;color:#333;font-weight:400;letter-spacing:-0.075px;-webkit-text-stroke:0.2px #333;">Service</div>
<div class="t" style="left:790.80px;top:159.76px;font-size:9.5px;line-height:9.5px;color:#c6c6c6;font-weight:400;letter-spacing:-0.028px;-webkit-text-stroke:0.2px #c6c6c6;">Include all</div>
<svg class="r" style="left:837.50px;top:162.80px" width="6" height="4" viewBox="0 0 6 4"><path d="M0.2 0.3 L5.8 0.3 L3 3.4 Z" fill="#c8c8c8"/></svg>
<div class="r" style="left:790.80px;top:169.10px;width:54.00px;height:1.00px;background:#dcdcdc;"></div>
<div class="r" style="left:676.10px;top:177.30px;width:172.90px;height:1.00px;background:#e3e3e3;"></div>
<div class="t" style="left:680.30px;top:185.63px;font-size:10.6px;line-height:10.6px;color:#333;font-weight:400;letter-spacing:0.162px;-webkit-text-stroke:0.2px #333;">Linked Account</div>
<div class="t" style="left:790.80px;top:185.76px;font-size:9.5px;line-height:9.5px;color:#c6c6c6;font-weight:400;letter-spacing:-0.028px;-webkit-text-stroke:0.2px #c6c6c6;">Include all</div>
<svg class="r" style="left:837.50px;top:188.80px" width="6" height="4" viewBox="0 0 6 4"><path d="M0.2 0.3 L5.8 0.3 L3 3.4 Z" fill="#c8c8c8"/></svg>
<div class="r" style="left:790.80px;top:195.10px;width:54.00px;height:1.00px;background:#dcdcdc;"></div>
<div class="r" style="left:676.10px;top:203.30px;width:172.90px;height:1.00px;background:#e3e3e3;"></div>
<div class="t" style="left:680.30px;top:211.63px;font-size:10.6px;line-height:10.6px;color:#333;font-weight:400;-webkit-text-stroke:0.2px #333;">Region</div>
<div class="t" style="left:790.80px;top:211.76px;font-size:9.5px;line-height:9.5px;color:#c6c6c6;font-weight:400;letter-spacing:-0.028px;-webkit-text-stroke:0.2px #c6c6c6;">Include all</div>
<svg class="r" style="left:837.50px;top:214.80px" width="6" height="4" viewBox="0 0 6 4"><path d="M0.2 0.3 L5.8 0.3 L3 3.4 Z" fill="#c8c8c8"/></svg>
<div class="r" style="left:790.80px;top:221.10px;width:54.00px;height:1.00px;background:#dcdcdc;"></div>
<div class="r" style="left:676.10px;top:229.30px;width:172.90px;height:1.00px;background:#e3e3e3;"></div>
<div class="t" style="left:680.30px;top:237.63px;font-size:10.6px;line-height:10.6px;color:#333;font-weight:400;letter-spacing:-0.025px;-webkit-text-stroke:0.2px #333;">Instance Type</div>
<div class="t" style="left:790.80px;top:237.76px;font-size:9.5px;line-height:9.5px;color:#c6c6c6;font-weight:400;letter-spacing:-0.028px;-webkit-text-stroke:0.2px #c6c6c6;">Include all</div>
<svg class="r" style="left:837.50px;top:240.80px" width="6" height="4" viewBox="0 0 6 4"><path d="M0.2 0.3 L5.8 0.3 L3 3.4 Z" fill="#c8c8c8"/></svg>
<div class="r" style="left:790.80px;top:247.10px;width:54.00px;height:1.00px;background:#dcdcdc;"></div>
<div class="r" style="left:676.10px;top:255.30px;width:172.90px;height:1.00px;background:#e3e3e3;"></div>
<div class="t" style="left:680.30px;top:263.63px;font-size:10.6px;line-height:10.6px;color:#333;font-weight:400;letter-spacing:-0.075px;-webkit-text-stroke:0.2px #333;">Usage Type</div>
<div class="t" style="left:790.80px;top:263.76px;font-size:9.5px;line-height:9.5px;color:#c6c6c6;font-weight:400;letter-spacing:-0.028px;-webkit-text-stroke:0.2px #c6c6c6;">Include all</div>
<svg class="r" style="left:837.50px;top:266.80px" width="6" height="4" viewBox="0 0 6 4"><path d="M0.2 0.3 L5.8 0.3 L3 3.4 Z" fill="#c8c8c8"/></svg>
<div class="r" style="left:790.80px;top:273.10px;width:54.00px;height:1.00px;background:#dcdcdc;"></div>
<div class="r" style="left:676.10px;top:281.30px;width:172.90px;height:1.00px;background:#e3e3e3;"></div>
<div class="t" style="left:680.30px;top:289.63px;font-size:10.6px;line-height:10.6px;color:#333;font-weight:400;letter-spacing:-0.032px;-webkit-text-stroke:0.2px #333;">Usage Type Group</div>
<div class="t" style="left:790.80px;top:289.76px;font-size:9.5px;line-height:9.5px;color:#c6c6c6;font-weight:400;letter-spacing:-0.028px;-webkit-text-stroke:0.2px #c6c6c6;">Include all</div>
<svg class="r" style="left:837.50px;top:292.80px" width="6" height="4" viewBox="0 0 6 4"><path d="M0.2 0.3 L5.8 0.3 L3 3.4 Z" fill="#c8c8c8"/></svg>
<div class="r" style="left:790.80px;top:299.10px;width:54.00px;height:1.00px;background:#dcdcdc;"></div>
<div class="r" style="left:676.10px;top:307.30px;width:172.90px;height:1.00px;background:#e3e3e3;"></div>
<div class="t" style="left:680.30px;top:315.63px;font-size:10.6px;line-height:10.6px;color:#333;font-weight:400;letter-spacing:-0.110px;-webkit-text-stroke:0.2px #333;">Resource</div>
<svg class="r" style="left:731.90px;top:316.20px" width="10" height="10" viewBox="0 0 10 10"><circle cx="5" cy="5" r="4.05" fill="#2b2b2b"/><circle cx="5.05" cy="2.9" r="0.8" fill="#fff"/><path d="M4.1 4.2 H5.8 V6.9 H6.4 V7.7 H3.9 V6.9 H4.5 V5 H4.1 Z" fill="#fff"/></svg>
<div class="t" style="left:790.80px;top:315.76px;font-size:9.5px;line-height:9.5px;color:#c6c6c6;font-weight:400;letter-spacing:-0.028px;-webkit-text-stroke:0.2px #c6c6c6;">Include all</div>
<svg class="r" style="left:837.50px;top:318.80px" width="6" height="4" viewBox="0 0 6 4"><path d="M0.2 0.3 L5.8 0.3 L3 3.4 Z" fill="#c8c8c8"/></svg>
<div class="r" style="left:790.80px;top:325.10px;width:54.00px;height:1.00px;background:#dcdcdc;"></div>
<div class="r" style="left:676.10px;top:333.30px;width:172.90px;height:1.00px;background:#e3e3e3;"></div>
<div class="t" style="left:680.30px;top:341.63px;font-size:10.6px;line-height:10.6px;color:#333;font-weight:400;letter-spacing:-0.444px;-webkit-text-stroke:0.2px #333;">Tag</div>
<div class="t" style="left:740px;width:105px;text-align:right;top:341.81px;font-size:9.44px;line-height:9.44px;color:#c4c4c4;-webkit-text-stroke:0.2px #c4c4c4">Include all</div>
<div class="r" style="left:676.10px;top:359.30px;width:172.90px;height:1.00px;background:#e3e3e3;"></div>
<div class="t" style="left:680.30px;top:367.63px;font-size:10.6px;line-height:10.6px;color:#333;font-weight:400;letter-spacing:-0.032px;-webkit-text-stroke:0.2px #333;">API Operation</div>
<div class="t" style="left:790.80px;top:367.76px;font-size:9.5px;line-height:9.5px;color:#c6c6c6;font-weight:400;letter-spacing:-0.028px;-webkit-text-stroke:0.2px #c6c6c6;">Include all</div>
<svg class="r" style="left:837.50px;top:370.80px" width="6" height="4" viewBox="0 0 6 4"><path d="M0.2 0.3 L5.8 0.3 L3 3.4 Z" fill="#c8c8c8"/></svg>
<div class="r" style="left:790.80px;top:377.10px;width:54.00px;height:1.00px;background:#dcdcdc;"></div>
<div class="r" style="left:676.10px;top:385.30px;width:172.90px;height:1.00px;background:#e3e3e3;"></div>
<div class="t" style="left:676.70px;top:394.17px;font-size:9.6px;line-height:9.6px;color:#1f64e6;font-weight:400;letter-spacing:-0.107px;-webkit-text-stroke:0.2px #1f64e6;">More filters</div>
<svg class="r" style="left:728.00px;top:396.50px" width="6" height="4" viewBox="0 0 6 4"><path d="M0.2 0.3 L5.8 0.3 L3 3.4 Z" fill="#3070e0"/></svg>
<svg class="r" style="left:681.80px;top:430.00px" width="8" height="5" viewBox="0 0 8 5"><path d="M0.2 4.4 L7.6 4.4 L3.9 0.3 Z" fill="#3b4550"/></svg>
<div class="t" style="left:695.50px;top:427.39px;font-size:9.7px;line-height:9.7px;color:#3b4550;font-weight:400;letter-spacing:0.411px;-webkit-text-stroke:0.2px #3b4550;-webkit-text-stroke:0.4px #3b4550;">ADVANCED OPTIONS</div>
<svg class="r" style="left:832.30px;top:427.00px" width="10" height="10" viewBox="0 0 10 10"><circle cx="5" cy="5" r="4.05" fill="#2b2b2b"/><circle cx="5.05" cy="2.9" r="0.8" fill="#fff"/><path d="M4.1 4.2 H5.8 V6.9 H6.4 V7.7 H3.9 V6.9 H4.5 V5 H4.1 Z" fill="#fff"/></svg>
<div class="r" style="left:676.10px;top:441.80px;width:172.90px;height:1.60px;background:#cfd7db;"></div>
<div class="t" style="left:676.10px;top:452.10px;font-size:9.8px;line-height:9.8px;color:#333;font-weight:700;letter-spacing:-0.315px;">Show costs as</div>
<svg class="r" style="left:742.90px;top:452.30px" width="10" height="10" viewBox="0 0 10 10"><circle cx="5" cy="5" r="4.05" fill="#2b2b2b"/><circle cx="5.05" cy="2.9" r="0.8" fill="#fff"/><path d="M4.1 4.2 H5.8 V6.9 H6.4 V7.7 H3.9 V6.9 H4.5 V5 H4.1 Z" fill="#fff"/></svg>
<div class="r" style="left:676.10px;top:467.80px;width:120.00px;height:1.20px;background:#d5d5d5;"></div>
<div class="r" style="left:0.00px;top:469.00px;width:931.00px;height:45.00px;background:#fff;"></div>
<div class="r" style="left:0.00px;top:510.50px;width:36.00px;height:3.50px;background:linear-gradient(90deg,#bbb,rgba(200,200,200,0));clip-path:polygon(0 0,100% 80%,100% 100%,0 100%);"></div>
</body></html>
